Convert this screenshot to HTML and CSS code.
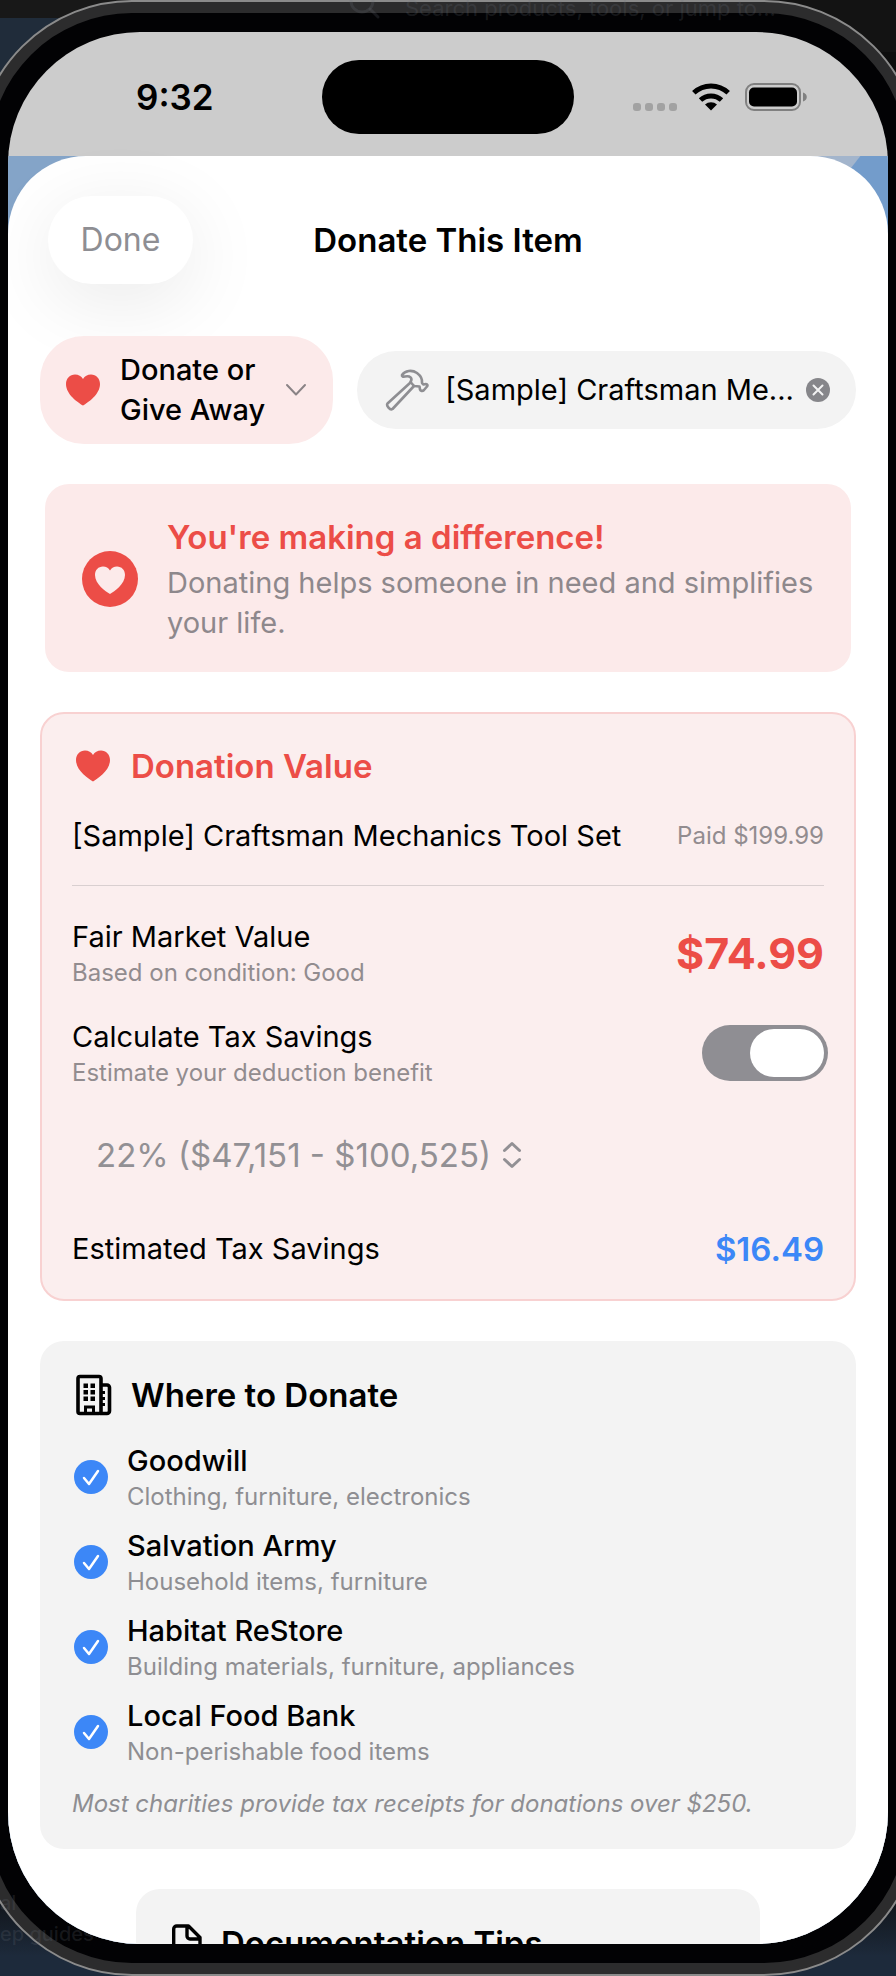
FILE: index.html
```html
<!DOCTYPE html>
<html lang="en">
<head>
<meta charset="utf-8">
<meta name="viewport" content="width=device-width, initial-scale=1">
<title>Donate This Item</title>
<link rel="stylesheet" href="styles.css">
</head>
<body>
<div class="device">
  <div class="bezel">
    <div class="screen">
      <header class="status">
        <span class="time">9:32</span>
        <span class="island"></span>
        <span class="indicators">
          <svg width="44" height="8" viewBox="0 0 44 8" fill="#a2a2a2" class="dots"><rect width="8" height="8" rx="3"/><rect x="12" width="8" height="8" rx="3"/><rect x="24" width="8" height="8" rx="3"/><rect x="36" width="8" height="8" rx="3"/></svg>
          <svg width="38" height="28" viewBox="0 0 38 28"><g fill="none" stroke="#000" stroke-width="5"><path d="M1.8 9.8a25 25 0 0 1 34.4 0"/><path d="M8.5 17a15.5 15.5 0 0 1 21 0"/></g><path d="M19 27.5l-6-6a9 9 0 0 1 12 0z"/></svg>
          <svg width="62" height="28" viewBox="0 0 62 28"><rect x="1" y="1" width="54" height="26" rx="8" fill="none" stroke="#808080" stroke-width="2"/><rect x="4" y="4.500" width="48" height="19" rx="5"/><path d="M58 9.500c5 1.500 5 7.500 0 9z" fill="#808080"/></svg>
        </span>
      </header>
      <main class="backdrop">
        <div class="sheet">
          <div class="nav">
            <button class="done" type="button">Done</button>
            <h1>Donate This Item</h1>
          </div>
          <div class="content">
            <div class="chips">
              <button class="chip chip-action" type="button">
                <svg class="heart" width="34" height="32" viewBox="0 0 34 32"><path d="M17 31.500C12 28.500 0 20.500 0 10 0 4.500 4 .5 9 .5c3.500 0 6.300 1.700 8 4.500 1.700-2.800 4.500-4.500 8-4.500 5 0 9 4 9 9.500 0 10.500-12 18.500-17 21.500z"/></svg>
                <span>Donate or<br>Give Away</span>
                <svg width="22" height="14" viewBox="0 0 22 14" fill="none" stroke="#8a8386" stroke-width="2" stroke-linecap="round" stroke-linejoin="round"><path d="M2 2l9 9.500L20 2"/></svg>
              </button>
              <div class="chip chip-item">
                <svg width="46" height="42" viewBox="0 0 46 42" fill="none" stroke="#8e8e92" stroke-width="2.600" stroke-linejoin="round" stroke-linecap="round"><path d="M17 6C20 1.500 27 .5 32 4c4 3 5.500 6.500 5 10l1.500 1.500 2.500-.5c1.500 0 2 1.500 1 2.500L39 21c-1.500 1.500-3.500 1-4-.5l-.5-3-5.500-.5-3.500-4C28 9 25 6.500 20 7.500c-2 .3-3.500 0-3-1.500z"/><path d="M25.500 13.500L2.500 34.500c-1.500 2 2.500 7 5 5.500L29 17"/></svg>
                <span class="chip-label">[Sample] Craftsman Me...</span>
                <button class="clear" type="button" aria-label="Remove item"><svg width="24" height="24" viewBox="0 0 24 24"><circle cx="12" cy="12" r="12" fill="#86868a"/><path d="M7.500 7.500l9 9m0-9l-9 9" stroke="#f3f3f3" stroke-width="2" stroke-linecap="round"/></svg></button>
              </div>
            </div>

            <section class="banner">
              <svg width="56" height="56" viewBox="0 0 56 56"><circle cx="28" cy="28" r="28" fill="#ec4d47"/><path d="M28 43C23.500 40.500 13 33 13 24c0-5 3.400-8.500 8-8.500 3 0 5.500 1.500 7 4 1.500-2.500 4-4 7-4 4.600 0 8 3.500 8 8.500 0 9-10.500 16.500-15 19z" fill="#fceaea"/></svg>
              <div>
                <h2>You're making a difference!</h2>
                <p>Donating helps someone in need and simplifies your life.</p>
              </div>
            </section>

            <section class="card value">
              <h2 class="heading red"><span class="icon"><svg class="heart" width="34" height="32" viewBox="0 0 34 32"><path d="M17 31.500C12 28.500 0 20.500 0 10 0 4.500 4 .5 9 .5c3.500 0 6.300 1.700 8 4.500 1.700-2.800 4.500-4.500 8-4.500 5 0 9 4 9 9.500 0 10.500-12 18.500-17 21.500z"/></svg></span>Donation Value</h2>
              <div class="row"><span>[Sample] Craftsman Mechanics Tool Set</span><small>Paid $199.99</small></div>
              <hr>
              <div class="row"><div class="pair"><span>Fair Market Value</span><small>Based on condition: Good</small></div><strong class="price">$74.99</strong></div>
              <div class="row"><label class="pair" for="tax"><span>Calculate Tax Savings</span><small>Estimate your deduction benefit</small></label><input class="toggle" id="tax" type="checkbox" role="switch" checked></div>
              <div class="picker">
                <select aria-label="Tax bracket"><option>22% ($47,151 - $100,525)</option></select>
                <svg width="20" height="28" viewBox="0 0 20 28" fill="none" stroke="#929094" stroke-width="3" stroke-linecap="round" stroke-linejoin="round"><path d="M2.500 9.500L10 2.500l7.500 7M2.500 18.500l7.500 7 7.500-7"/></svg>
              </div>
              <div class="row"><span>Estimated Tax Savings</span><strong class="saving">$16.49</strong></div>
            </section>

            <section class="card where">
              <h2 class="heading"><span class="icon"><svg width="36" height="42" viewBox="0 0 36 42"><g fill="none" stroke="#000" stroke-width="3.600"><rect x="2" y="2.500" width="23" height="37" rx="2"/><path d="M25 11H31a2.500 2.500 0 0 1 2.500 2.500V37a2.500 2.500 0 0 1-2.500 2.500h-7"/><path d="M9.500 39.500V33h8v6.500" stroke-width="3"/></g><path d="M7.500 9.500H12v4.500H7.500zM14.500 9.500H19v4.500h-4.500zM7.500 16H12v4.500H7.500zM14.500 16H19v4.500h-4.500zM7.500 22.500H12V27H7.500zM14.500 22.500H19V27h-4.500zM25 17h4v3h-4zM25 23h4v3h-4zM25 29h4v3h-4z"/></svg></span>Where to Donate</h2>
              <ul class="places">
                <li><svg class="check" viewBox="0 0 34 34"><circle cx="17" cy="17" r="17"/><path d="M10 18l5 6 9-13"/></svg><div class="pair"><b>Goodwill</b><small>Clothing, furniture, electronics</small></div></li>
                <li><svg class="check" viewBox="0 0 34 34"><circle cx="17" cy="17" r="17"/><path d="M10 18l5 6 9-13"/></svg><div class="pair"><b>Salvation Army</b><small>Household items, furniture</small></div></li>
                <li><svg class="check" viewBox="0 0 34 34"><circle cx="17" cy="17" r="17"/><path d="M10 18l5 6 9-13"/></svg><div class="pair"><b>Habitat ReStore</b><small>Building materials, furniture, appliances</small></div></li>
                <li><svg class="check" viewBox="0 0 34 34"><circle cx="17" cy="17" r="17"/><path d="M10 18l5 6 9-13"/></svg><div class="pair"><b>Local Food Bank</b><small>Non-perishable food items</small></div></li>
              </ul>
              <p class="note">Most charities provide tax receipts for donations over $250.</p>
            </section>

            <section class="card tips">
              <h2 class="heading"><span class="icon"><svg width="30" height="38" viewBox="0 0 30 38" fill="none" stroke="#000" stroke-width="3.400" stroke-linejoin="round"><path d="M5 2h11.500L28 13.500V33a3.500 3.500 0 0 1-3.500 3.500H5A3.500 3.500 0 0 1 1.700 33V5A3 3 0 0 1 5 2zM15 2v10a3 3 0 0 0 3 3h10"/></svg></span>Documentation Tips</h2>
            </section>
          </div>
        </div>
      </main>
    </div>
  </div>
</div>
<div class="ghost ghost-search"><svg width="32" height="32" viewBox="0 0 32 32" fill="none" stroke="currentColor" stroke-width="3" stroke-linecap="round"><circle cx="13" cy="13" r="11"/><path d="M21 21l8 8"/></svg><span>Search products, tools, or jump to...</span></div>
<div class="ghost ghost-guides"><span>al</span><span>ep guides</span></div>
</body>
</html>
```

FILE: styles.css
```css
* { box-sizing: border-box; }

body {
  margin: 0;
  height: 100vh;
  position: relative;
  overflow: hidden;
  background:
    linear-gradient(#181818 0 18px, #202c3a 18px 110px, transparent 110px) left / 50% 100% no-repeat,
    linear-gradient(#131313 0 52px, #0d0d0d 52px 110px, transparent 110px) right / 50% 100% no-repeat,
    linear-gradient(#0c0c0c calc(100% - 100px), #1d2a3b calc(100% - 20px));
  font-family: Inter, "Liberation Sans", sans-serif;
  font-size: 29px;
  line-height: 40px;
  color: #000;
}

h1, h2, p, ul { margin: 0; padding: 0; }
button, select { font: inherit; border: 0; background: none; padding: 0; margin: 0; color: inherit; }
svg { display: block; flex: none; }

/* Phone frame, wider than the window */
.device {
  height: 100%;
  margin: 0 -24px;
  border: 2px solid #8b8b8b;
  border-radius: 156px;
  background: #2c2c2d;
  padding: 11px;
}
.bezel {
  height: 100%;
  padding: 19px;
  border-radius: 143px;
  background: #020204;
}
.screen {
  position: relative;
  z-index: 1;
  height: 100%;
  display: flex;
  flex-direction: column;
  overflow: hidden;
  border-radius: 132px;
  background: #ccc;
}

/* Status bar */
.status {
  flex: none;
  height: 124px;
  padding: 5px 80px 0;
  display: grid;
  grid-template-columns: 1fr auto 1fr;
  align-items: center;
}
.time { font-size: 35px; font-weight: 600; padding-left: 48px; }
.island { width: 252px; height: 74px; border-radius: 37px; background: #000; }
.indicators { display: flex; align-items: center; justify-content: flex-end; gap: 15px; padding-right: 1px; }
.dots { align-self: flex-end; }

/* Sheet */
.backdrop {
  flex: 1;
  min-height: 0;
  background:
    linear-gradient(128deg, #a3b5cc 25px, #739ccb 26px) right top / 60px 100px no-repeat,
    linear-gradient(90deg, #84a4c8 50%, #a3b5cc 50%);
}
.sheet { height: 100%; background: #fff; border-radius: 78px 78px 0 0; }
.nav {
  padding: 40px;
  display: grid;
  grid-template-columns: 1fr auto 1fr;
  align-items: center;
}
.nav h1 { font-size: 33px; line-height: 44px; font-weight: 600; }
.done {
  justify-self: start;
  width: 145px;
  height: 88px;
  border-radius: 44px;
  background: #fff;
  color: #8e8e93;
  font-size: 32px;
  box-shadow: 0 16px 80px rgba(0, 0, 0, 0.09);
}
.content {
  padding: 12px 32px 0;
  display: flex;
  flex-direction: column;
  gap: 40px;
}

/* Chips */
.chips { display: flex; align-items: center; gap: 24px; }
.chip { display: flex; align-items: center; }
.chip-action {
  flex: none;
  gap: 20px;
  padding: 14px 26px;
  border-radius: 44px;
  background: #fceaea;
  text-align: left;
  font-weight: 500;
}
.heart { fill: #ec4d47; }
.chip-item {
  flex: 1;
  min-width: 0;
  height: 78px;
  padding: 0 26px 0 28px;
  gap: 14px;
  border-radius: 39px;
  background: #f3f3f3;
}
.chip-label { flex: 1; min-width: 0; white-space: nowrap; }

/* Encouragement banner */
.banner {
  margin: 0 5px;
  padding: 31px 32px 29px 37px;
  display: flex;
  align-items: center;
  gap: 29px;
  border-radius: 24px;
  background: #fceaea;
  color: #8e888c;
}
.banner h2 { font-size: 33px; line-height: 44px; font-weight: 600; color: #ec4d47; margin-bottom: 4px; }

/* Cards */
.card { border-radius: 24px; padding: 32px; background: #f3f3f3; }
.heading { display: flex; align-items: center; gap: 15px; font-size: 33px; line-height: 44px; font-weight: 600; }
.icon { width: 44px; height: 44px; padding-left: 4px; display: flex; align-items: center; }
.red { color: #ec4d47; }
small { font-size: 24px; line-height: 32px; color: #8e8e92; }
.pair { display: flex; flex-direction: column; }

.value {
  display: flex;
  flex-direction: column;
  gap: 28px;
  padding: 30px;
  border: 2px solid #f8d1d1;
  background: #fbeeee;
}
.row { display: flex; align-items: center; justify-content: space-between; }
.value small { color: #928c8f; }
.value hr { width: 100%; height: 1px; margin: 1px 0 3px; border: 0; background: #d9cfd0; }
.price { font-size: 43px; line-height: 48px; font-weight: 700; color: #ec4d47; }
.saving { font-size: 33px; font-weight: 600; color: #3c87f7; }
.toggle {
  appearance: none;
  width: 126px;
  height: 56px;
  margin: 0 -4px 0 0;
  padding: 4px;
  border-radius: 28px;
  background: #8f8e93;
  display: flex;
}
.toggle::before { content: ""; width: 74px; height: 48px; border-radius: 24px; background: #fff; }
.toggle:checked { justify-content: flex-end; }
.picker { display: flex; align-items: center; gap: 10px; height: 76px; margin-bottom: 8px; padding-left: 24px; }
.picker select { appearance: none; font-size: 33px; line-height: 44px; color: #929094; }

/* Charity list */
.places {
  list-style: none;
  margin: 23px 0 20px;
  display: flex;
  flex-direction: column;
  gap: 12px;
}
.places li { height: 73px; display: flex; align-items: center; gap: 19px; padding-left: 2px; }
.places b { font-weight: 500; }
.check { width: 34px; height: 34px; fill: #3c87f7; }
.check path { fill: none; stroke: #fff; stroke-width: 2.500; stroke-linecap: round; stroke-linejoin: round; }
.where { padding-bottom: 29px; }
.note { font-size: 24px; line-height: 32px; font-style: italic; color: #8e8e92; }
.tips { margin: 0 96px; }
.tips .icon { width: 38px; }

/* Desktop text showing faintly through the bezel */
.ghost { position: absolute; color: rgba(110, 115, 125, 0.2); white-space: nowrap; }
.ghost-search { top: -12px; left: 349px; display: flex; gap: 24px; font-size: 22px; }
.ghost-guides { bottom: 26px; left: 0; display: flex; flex-direction: column; font-size: 20px; line-height: 31px; font-weight: 500; }
```
